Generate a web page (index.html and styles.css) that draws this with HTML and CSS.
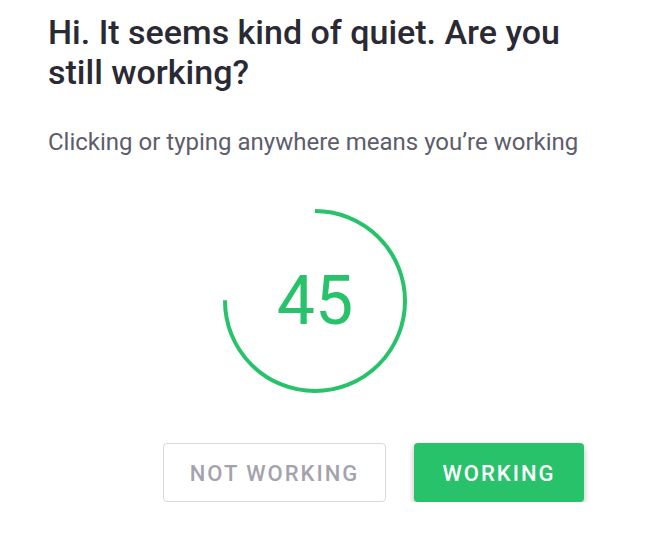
FILE: index.html
```html
<!DOCTYPE html>
<html>
<head>
<meta charset="utf-8">
<link rel="stylesheet" href="styles.css">
</head>
<body>
<div class="dialog">
  <h1 class="title">Hi. It seems kind of quiet. Are you still working?</h1>
  <p class="subtitle">Clicking or typing anywhere means you’re working</p>
  <div class="timer">
    <svg class="ring" width="190" height="190" viewBox="0 0 190 190">
      <circle cx="95" cy="95" r="90" fill="none" stroke="#28c26b" stroke-width="4"
        stroke-dasharray="424.1 565.5" transform="rotate(-90 95 95)"/>
    </svg>
    <span class="count">45</span>
  </div>
  <div class="actions">
    <button class="btn btn-outline">NOT WORKING</button>
    <button class="btn btn-primary">WORKING</button>
  </div>
</div>
</body>
</html>
```
FILE: styles.css
```css
html, body {
  margin: 0;
  padding: 0;
  background: #ffffff;
}
body {
  font-family: Roboto, "Liberation Sans", sans-serif;
}
.dialog {
  width: 536px;
  padding: 12px 0 0 48px;
  display: flex;
  flex-direction: column;
}
.title {
  margin: 0;
  font-size: 34px;
  line-height: 40px;
  font-weight: 500;
  color: #2a2a35;
  width: 536px;
}
.subtitle {
  margin: 36px 0 0;
  font-size: 24px;
  line-height: 28px;
  color: #5d5d6b;
  white-space: nowrap;
}
.timer {
  position: relative;
  width: 190px;
  height: 190px;
  margin: 50px 0 0 172px;
  display: flex;
  align-items: center;
  justify-content: center;
}
.ring {
  position: absolute;
  left: 0;
  top: 0;
}
.count {
  font-size: 68px;
  color: #28c26b;
  font-weight: 400;
  line-height: 1;
}
.actions {
  display: flex;
  justify-content: flex-end;
  gap: 28px;
  margin-top: 47px;
}
.btn {
  height: 59px;
  border-radius: 4px;
  font-family: Roboto, "Liberation Sans", sans-serif;
  font-size: 22px;
  font-weight: 500;
  letter-spacing: 2px;
  padding: 2px 0 0;
  cursor: pointer;
}
.btn-outline {
  width: 223px;
  background: #fff;
  border: 1px solid #d8d8de;
  color: #a3a3ae;
}
.btn-primary {
  width: 170px;
  background: #28c26b;
  border: none;
  color: #fff;
  box-shadow: 0 3px 6px rgba(0,0,0,0.28);
}
```
